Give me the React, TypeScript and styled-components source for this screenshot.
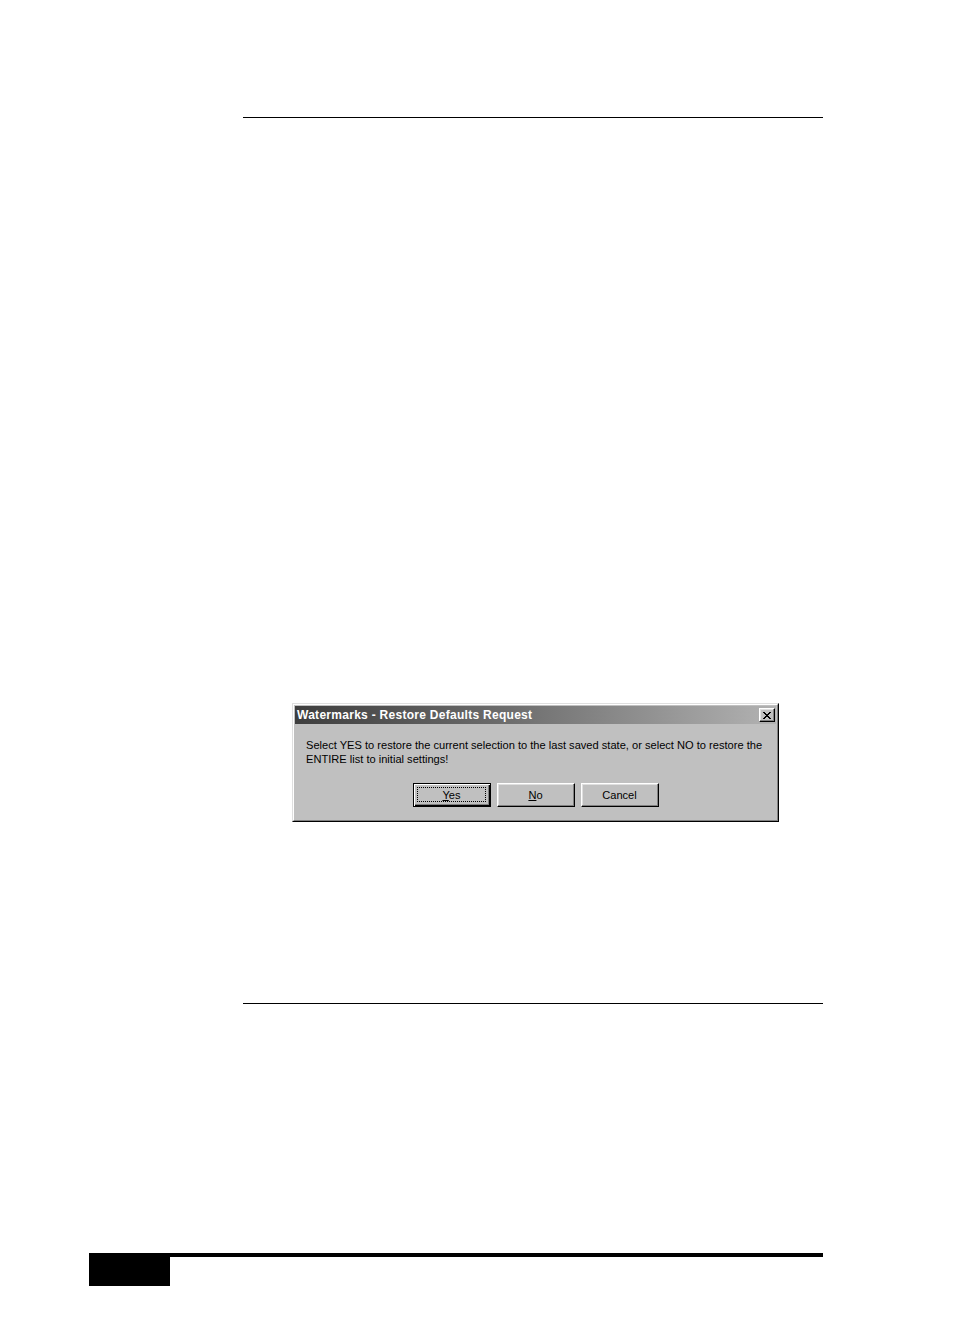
import React from 'react';
import styled, { createGlobalStyle } from 'styled-components';

const GlobalStyle = createGlobalStyle`
    html, body {
        margin: 0;
        padding: 0;
        background: #ffffff;
    }
    body {
        font-family: "Liberation Sans", Arial, sans-serif;
    }
`;

const Page = styled.div`
    width: 954px;
    height: 1343px;
    display: flex;
    flex-direction: column;
    background: #ffffff;
    overflow: hidden;
`;

const Rule = styled.div<{ top: number }>`
    margin-top: ${props => props.top}px;
    margin-left: 243px;
    width: 580px;
    height: 1px;
    background: #000000;
    flex-shrink: 0;
`;

const Dialog = styled.div`
    margin-top: 585px;
    margin-left: 292px;
    width: 487px;
    height: 119px;
    box-sizing: border-box;
    flex-shrink: 0;
    background: #c0c0c0;
    border: 1px solid;
    border-color: #dfdfdf #000000 #000000 #dfdfdf;
    display: flex;
    flex-direction: column;
`;

const DialogInner = styled.div`
    flex: 1;
    border: 1px solid;
    border-color: #ffffff #808080 #808080 #ffffff;
    padding: 1px 1px 0 1px;
    display: flex;
    flex-direction: column;
`;

const TitleBar = styled.div`
    height: 18px;
    display: flex;
    align-items: center;
    justify-content: space-between;
    padding: 0 1px 0 2px;
    background: linear-gradient(to right, #3e3e3e 0%, #6e6e6e 45%, #b2b2b2 100%);
`;

const Title = styled.div`
    color: #ffffff;
    font-size: 12px;
    font-weight: bold;
    letter-spacing: 0.28px;
    white-space: nowrap;
`;

const CloseButton = styled.div`
    width: 16px;
    height: 14px;
    box-sizing: border-box;
    background: #c0c0c0;
    border: 1px solid;
    border-color: #ffffff #000000 #000000 #ffffff;
    box-shadow: inset -1px -1px 0 #808080, inset 1px 1px 0 #dfdfdf;
    display: flex;
    align-items: center;
    justify-content: center;
`;

const Message = styled.div`
    padding: 14px 0 0 11px;
    font-size: 11.1px;
    line-height: 14px;
    color: #000000;
    white-space: nowrap;
`;

const ButtonRow = styled.div`
    margin-top: 17px;
    display: flex;
    justify-content: center;
    gap: 6px;
`;

const Button = styled.div<{ isDefault?: boolean }>`
    width: 78px;
    height: 24px;
    box-sizing: border-box;
    display: flex;
    align-items: center;
    justify-content: center;
    padding-bottom: 1px;
    position: relative;
    font-size: 11.1px;
    color: #000000;
    background: #c0c0c0;
    border: 1px solid;
    border-color: ${props => props.isDefault ? '#000000' : '#ffffff #000000 #000000 #ffffff'};
    box-shadow: ${props => props.isDefault
        ? 'inset 1px 1px 0 #ffffff, inset -1px -1px 0 #000000, inset -2px -2px 0 #808080'
        : 'inset -1px -1px 0 #808080, inset 1px 1px 0 #dfdfdf'};
`;

const FocusRing = styled.div`
    position: absolute;
    left: 3px;
    top: 3px;
    right: 4px;
    bottom: 4px;
    border: 1px dotted #000000;
`;

const Key = styled.span`
    text-decoration: underline;
`;

const Footer = styled.div`
    margin-top: 249px;
    padding-left: 89px;
    display: flex;
    align-items: flex-start;
    flex-shrink: 0;
`;

const FooterTab = styled.div`
    width: 81px;
    height: 33px;
    background: #000000;
`;

const FooterLine = styled.div`
    width: 653px;
    height: 4px;
    background: #000000;
`;

function CloseGlyph(): JSX.Element {
    return (
        <svg width="8" height="7" viewBox="0 0 8 7" shapeRendering="crispEdges">
            <path d="M0 0h2v1h-2z M6 0h2v1h-2z M1 1h2v1h-2z M5 1h2v1h-2z M2 2h4v1h-4z M3 3h2v1h-2z M2 4h4v1h-4z M1 5h2v1h-2z M5 5h2v1h-2z M0 6h2v1h-2z M6 6h2v1h-2z" fill="#000000" />
        </svg>
    );
}

function App(): JSX.Element {
    return (
        <>
            <GlobalStyle />
            <Page>
                <Rule top={117} />
                <Dialog>
                    <DialogInner>
                        <TitleBar>
                            <Title>Watermarks - Restore Defaults Request</Title>
                            <CloseButton><CloseGlyph /></CloseButton>
                        </TitleBar>
                        <Message>
                            Select YES to restore the current selection to the last saved state, or select NO to restore the<br />
                            ENTIRE list to initial settings!
                        </Message>
                        <ButtonRow>
                            <Button isDefault>
                                <FocusRing />
                                <span><Key>Y</Key>es</span>
                            </Button>
                            <Button><span><Key>N</Key>o</span></Button>
                            <Button>Cancel</Button>
                        </ButtonRow>
                    </DialogInner>
                </Dialog>
                <Rule top={181} />
                <Footer>
                    <FooterTab />
                    <FooterLine />
                </Footer>
            </Page>
        </>
    );
}

export default App;
